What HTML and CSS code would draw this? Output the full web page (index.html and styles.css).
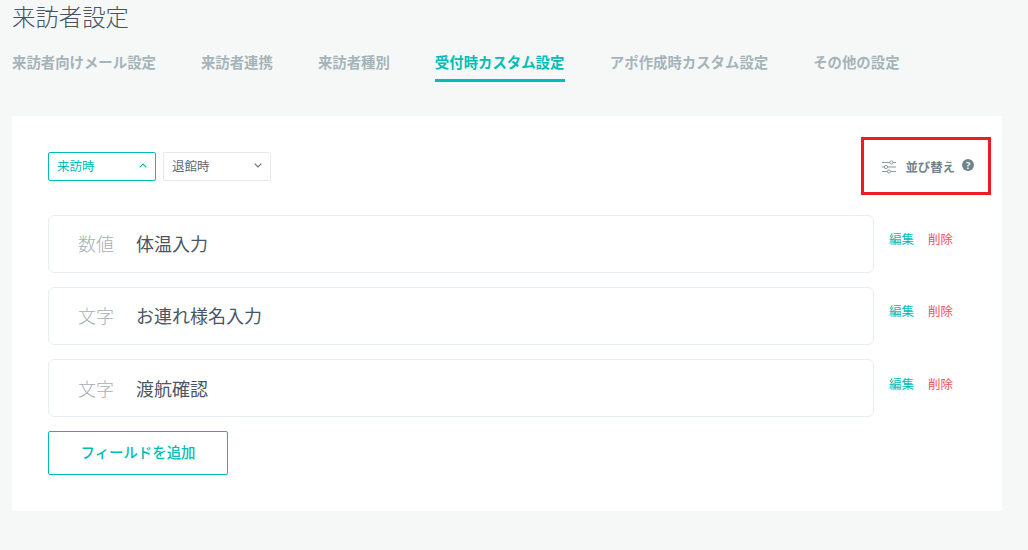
FILE: index.html
```html
<!DOCTYPE html>
<html lang="ja">
<head>
<meta charset="utf-8">
<title>来訪者設定</title>
<link rel="stylesheet" href="styles.css">
</head>
<body>
<h1 class="title">来訪者設定</h1>
<nav class="tabs">
  <a class="tab">来訪者向けメール設定</a>
  <a class="tab">来訪者連携</a>
  <a class="tab">来訪者種別</a>
  <a class="tab active">受付時カスタム設定</a>
  <a class="tab">アポ作成時カスタム設定</a>
  <a class="tab">その他の設定</a>
</nav>
<main class="card">
  <div class="toolbar">
    <div class="selects">
      <div class="select selected"><span>来訪時</span>
        <svg class="chev" width="8" height="5" viewBox="0 0 8 5"><path d="M.7 4.300L4 1l3.300 3.300" fill="none" stroke="#00bdb5" stroke-width="1.100"/></svg>
      </div>
      <div class="select"><span>退館時</span>
        <svg class="chev" width="8" height="5" viewBox="0 0 8 5"><path d="M.7.700L4 4l3.300-3.300" fill="none" stroke="#5f6f78" stroke-width="1.100"/></svg>
      </div>
    </div>
    <div class="sort">
      <svg class="sliders" width="14" height="14" viewBox="0 0 14 14" fill="none" stroke="#8b9ba1" stroke-width="1">
        <path d="M0 2.500h8M11 2.500h3M0 7h2.500M5.500 7h8.500M0 11.500h5.500M8.500 11.500h5.500"/>
        <circle cx="9.500" cy="2.500" r="1.600"/><circle cx="4" cy="7" r="1.600"/><circle cx="7" cy="11.500" r="1.600"/>
      </svg>
      <span class="sort-label">並び替え</span>
      <span class="help">?</span>
    </div>
  </div>
  <ul class="fields">
    <li class="field-row">
      <div class="field"><span class="type">数値</span><span class="name">体温入力</span></div>
      <div class="actions"><a class="edit">編集</a><a class="del">削除</a></div>
    </li>
    <li class="field-row">
      <div class="field"><span class="type">文字</span><span class="name">お連れ様名入力</span></div>
      <div class="actions"><a class="edit">編集</a><a class="del">削除</a></div>
    </li>
    <li class="field-row">
      <div class="field"><span class="type">文字</span><span class="name">渡航確認</span></div>
      <div class="actions"><a class="edit">編集</a><a class="del">削除</a></div>
    </li>
  </ul>
  <button class="add">フィールドを追加</button>
</main>
<div class="highlight"></div>
</body>
</html>
```

FILE: styles.css
```css
* { box-sizing: border-box; }
html, body { margin: 0; height: 100%; }
body {
  padding: 0 26px 0 12px;
  background: #f6f8f8;
  color: #4a5563;
  font-family: "Lato", "Noto Sans CJK JP", sans-serif;
  overflow: hidden;
  position: relative;
}
.title {
  margin: 0;
  height: 34px;
  font-size: 23.400px;
  line-height: 34px;
  font-weight: 300;
  color: #47535f;
}
.tabs {
  display: flex;
  gap: 45px;
  margin-top: 10px;
  height: 38px;
}
.tab {
  display: block;
  height: 38px;
  font-size: 14.400px;
  line-height: 37px;
  font-weight: 700;
  color: #a5b4b8;
  white-space: nowrap;
}
.tab.active {
  color: #00bdb5;
  border-bottom: 3px solid #00bdb5;
  width: 130px;
}
.card {
  margin-top: 34px;
  height: 395px;
  background: #fff;
  padding: 36px 36px 0;
}
.toolbar {
  display: flex;
  justify-content: space-between;
  align-items: center;
  height: 29px;
}
.selects { display: flex; gap: 7px; }
.select {
  width: 108px;
  height: 29px;
  border: 1px solid #e6e9ea;
  border-radius: 2px;
  padding: 0 8px 2px;
  display: flex;
  align-items: center;
  justify-content: space-between;
  font-size: 12.500px;
  color: #5f6b75;
}
.select.selected {
  border-color: #00bdb5;
  color: #00bdb5;
}
.sort {
  display: flex;
  align-items: center;
  margin-right: -8px;
  height: 29px;
}
.sliders { margin-right: 9px; }
.sort-label {
  font-size: 12.400px;
  font-weight: 700;
  color: #6f858c;
}
.help {
  width: 12px;
  height: 12px;
  border-radius: 50%;
  background: #6f858c;
  color: #fff;
  font-size: 10px;
  font-weight: 900;
  line-height: 12px;
  text-align: center;
  margin-left: 7px;
  margin-top: -3px;
}
.fields {
  list-style: none;
  margin: 34px 0 0;
  padding: 0;
  display: flex;
  flex-direction: column;
  gap: 14px;
}
.field-row { display: flex; align-items: flex-start; }
.field {
  width: 826px;
  height: 58px;
  border: 1px solid #e9eef2;
  border-radius: 6px;
  display: flex;
  align-items: center;
  padding: 0 0 3px 29px;
  font-size: 18px;
}
.field-row:last-child .field { padding-bottom: 1px; }
.type { color: #a5b0b5; width: 58px; font-weight: 300; }
.name { color: #4a5563; font-weight: 400; }
.actions {
  display: flex;
  gap: 14px;
  margin-left: 15px;
  padding-top: 15px;
  font-size: 12.500px;
  line-height: 20px;
}
.field-row:last-child .actions { padding-top: 16px; }
.edit { color: #00bdb5; }
.del { color: #f4504f; }
.add {
  display: block;
  margin-top: 14px;
  width: 180px;
  height: 44px;
  background: #fff;
  border: 1px solid #00bdb5;
  border-radius: 2px;
  color: #00bdb5;
  font-family: inherit;
  font-size: 14.400px;
  font-weight: 500;
  padding: 0 0 3px;
}
.highlight {
  position: absolute;
  left: 861px;
  top: 137px;
  width: 130px;
  height: 58px;
  border: 3px solid #ec1c24;
  pointer-events: none;
}
```
